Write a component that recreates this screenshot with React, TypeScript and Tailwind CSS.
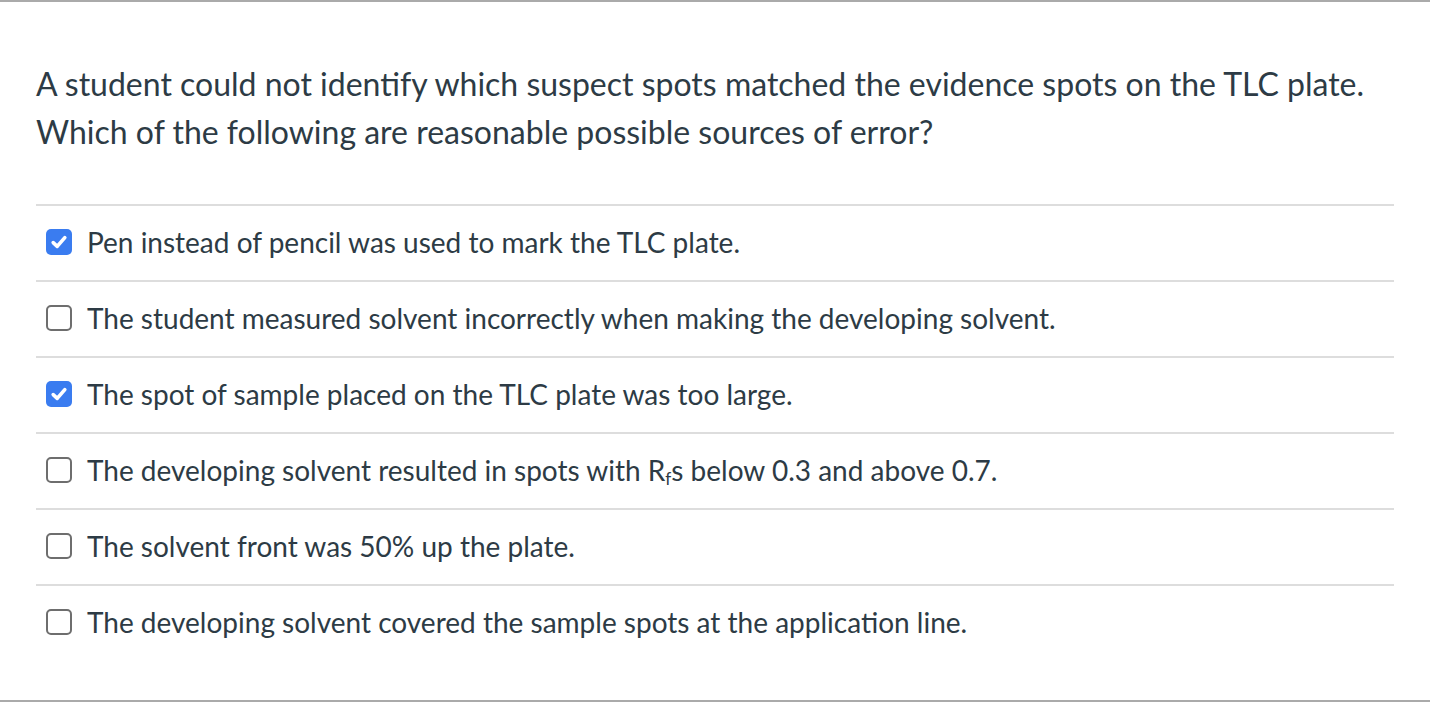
import React from "react";

const options: { text: React.ReactNode; checked: boolean }[] = [
  { text: "Pen instead of pencil was used to mark the TLC plate.", checked: true },
  { text: "The student measured solvent incorrectly when making the developing solvent.", checked: false },
  { text: "The spot of sample placed on the TLC plate was too large.", checked: true },
  {
    text: (
      <>
        The developing solvent resulted in spots with R
        <sub className="text-[17px] relative top-[4px] align-baseline">f</sub>s below 0.3 and above 0.7.
      </>
    ),
    checked: false,
  },
  { text: "The solvent front was 50% up the plate.", checked: false },
  { text: "The developing solvent covered the sample spots at the application line.", checked: false },
];

function Box({ checked }: { checked: boolean }) {
  if (checked) {
    return (
      <div className="w-[26px] h-[26px] rounded-[5px] bg-[#3a7cf0] flex items-center justify-center shrink-0">
        <svg width="18" height="18" viewBox="0 0 18 18">
          <path d="M3.2 9.6 L7.2 13.4 L14.8 4.6" fill="none" stroke="white" strokeWidth="3.6" strokeLinecap="round" strokeLinejoin="round" />
        </svg>
      </div>
    );
  }
  return <div className="w-[26px] h-[26px] rounded-[5px] border-2 border-[#6e6e6e] bg-white shrink-0" />;
}

export default function App() {
  return (
    <div
      className="w-full h-[702px] bg-white border-t-2 border-b-2 border-[#aaaaaa] text-[#2d3b45] pl-[36px] pr-[36px] pt-[58px]"
      style={{ fontFamily: "Lato, 'Noto Sans', sans-serif" }}
    >
      <div className="text-[32px] leading-[48px]">
        A student could not identify which suspect spots matched the evidence spots on the TLC plate.
        <br />
        Which of the following are reasonable possible sources of error?
      </div>
      <div className="mt-[48px]">
        {options.map((o, i) => (
          <div key={i} className="border-t-2 border-[#dddddd] h-[76px] flex items-center pl-[10px] pb-[3px] gap-[15px]">
            <Box checked={o.checked} />
            <div className="text-[28px] leading-[32px]">{o.text}</div>
          </div>
        ))}
      </div>
    </div>
  );
}
